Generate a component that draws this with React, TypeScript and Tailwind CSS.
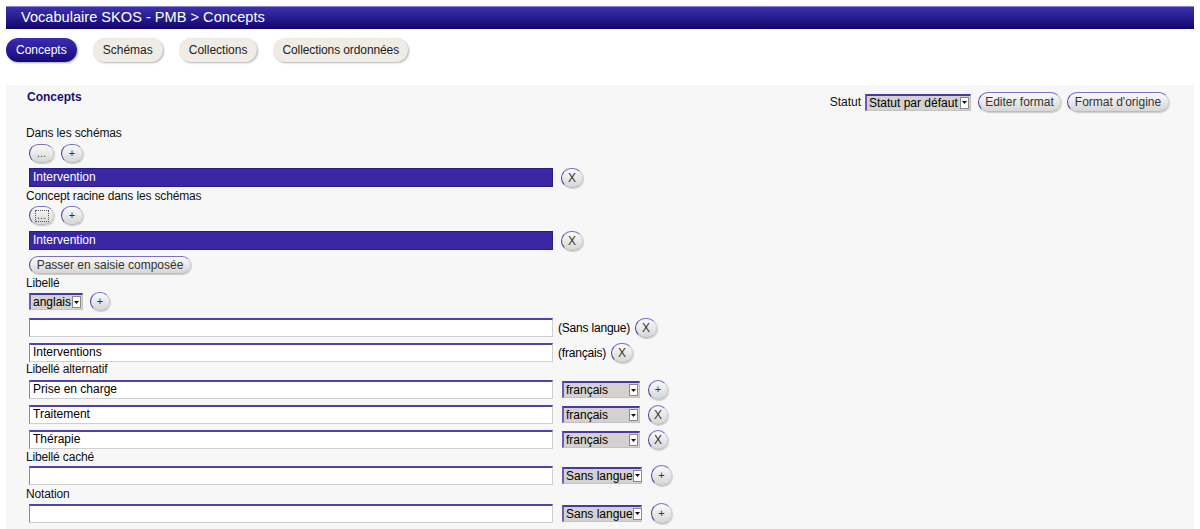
import React from "react";

const F = "font-['Liberation_Sans',Arial,sans-serif]";

function RB({ className = "", children }: { className?: string; children: React.ReactNode }) {
  return (
    <span
      className={`inline-flex shrink-0 items-center justify-center rounded-full bg-gradient-to-b from-[#fbfbfb] to-[#d6d6d6] border-[1.5px] border-t-[#7b6ec4] border-l-[#4b3ba3] border-r-[#cfcfcf] border-b-[#bcbcbc] shadow-[1px_1px_1px_rgba(0,0,0,0.18)] text-[#333] ${className}`}
    >
      {children}
    </span>
  );
}

function Arrow() {
  return (
    <span className="flex h-[12px] w-[9px] shrink-0 items-center justify-center bg-white border border-[#8a8a8a]">
      <svg width="5" height="3" viewBox="0 0 5 3">
        <path d="M0 0 L5 0 L2.5 3 Z" fill="#111" />
      </svg>
    </span>
  );
}

function Sel({ className = "", label }: { className?: string; label: string }) {
  return (
    <div
      className={`flex shrink-0 items-center justify-between h-[17px] bg-[#d5d1ce] border border-[#c2c2c2] border-t-2 border-t-[#4a3aa0] border-l-2 border-l-[#6b5db9] pr-[1px] ${className}`}
    >
      <span className="pl-[2px] text-[12px] leading-[14px] text-black whitespace-nowrap">{label}</span>
      <Arrow />
    </div>
  );
}

function Inp({ value = "" }: { value?: string }) {
  return (
    <div className="w-[524px] h-[19px] shrink-0 bg-white border border-[#cfcfcf] border-t-2 border-t-[#5042a8] border-l-[#8a80c8] pl-[3px] text-[12px] leading-[15px] text-black">
      {value}
    </div>
  );
}

function Bar({ text }: { text: string }) {
  return (
    <div className="w-[524px] h-[19px] shrink-0 bg-[#3a27a3] border border-[#2a1a86] pl-[3px] text-[12px] leading-[17px] text-white">
      {text}
    </div>
  );
}

function Label({ className = "", children }: { className?: string; children: React.ReactNode }) {
  return <div className={`h-[14px] text-[12px] tracking-[-0.15px] leading-[14px] text-[#111] ${className}`}>{children}</div>;
}

export default function App() {
  return (
    <div className={`${F} w-[1200px] h-[529px] bg-white overflow-hidden`}>
      <div className="mx-[6px] mt-[6px] h-[23px] bg-gradient-to-b from-[#3e30b0] to-[#12046c] border-t border-t-[#8c82d2] pl-[15px] text-[14.6px] leading-[21px] text-white">
        Vocabulaire SKOS - PMB &gt; Concepts
      </div>

      <div className="ml-[6px] mt-[9px] flex gap-[16px] text-[12px]">
        <span className="h-[24px] px-[10px] leading-[24px] rounded-full bg-gradient-to-b from-[#3e2cb2] to-[#16087a] text-white shadow-[1px_1px_2px_rgba(0,0,0,0.35)]">
          Concepts
        </span>
        <span className="h-[24px] px-[10px] leading-[24px] rounded-full bg-[#efebe5] text-[#222] shadow-[1px_1px_2px_rgba(0,0,0,0.3)]">
          Schémas
        </span>
        <span className="h-[24px] px-[10px] leading-[24px] rounded-full bg-[#efebe5] text-[#222] shadow-[1px_1px_2px_rgba(0,0,0,0.3)]">
          Collections
        </span>
        <span className="h-[24px] px-[9px] leading-[24px] tracking-[-0.1px] rounded-full bg-[#efebe5] text-[#222] shadow-[1px_1px_2px_rgba(0,0,0,0.3)]">
          Collections ordonnées
        </span>
      </div>

      <div className="mx-[6px] mt-[23px] h-[460px] bg-[#f7f7f7] pl-[20px] pr-[25px] pt-[7px]">
        <div className="flex h-[20px] items-start justify-between">
          <div className="pl-[1px] text-[12px] font-bold leading-[11px] text-[#1c0d6e]">Concepts</div>
          <div className="flex items-center gap-[6px] text-[12px] text-[#111]">
            <span className="mr-[-2px]">Statut</span>
            <Sel className="w-[106px]" label="Statut par défaut" />
            <RB className="h-[20px] w-[83px] ml-[1px] text-[12px]">Editer format</RB>
            <RB className="h-[20px] w-[102px] text-[12px]">Format d'origine</RB>
          </div>
        </div>

        <Label className="mt-[14px]">Dans les schémas</Label>
        <div className="mt-[4px] ml-[3px] flex h-[19px] gap-[7px]">
          <RB className="h-[19px] w-[25px] text-[10px]">…</RB>
          <RB className="h-[19px] w-[22px] text-[11px]">+</RB>
        </div>
        <div className="mt-[5px] ml-[3px] flex h-[19px] items-center gap-[8px]">
          <Bar text="Intervention" />
          <RB className="h-[20px] w-[22px] text-[12px]">X</RB>
        </div>

        <Label className="mt-[2px]">Concept racine dans les schémas</Label>
        <div className="mt-[3px] ml-[3px] flex h-[19px] gap-[7px]">
          <RB className="h-[19px] w-[25px] text-[10px]">
            <span className="border border-dotted border-[#555] px-[1px] leading-[10px]">…</span>
          </RB>
          <RB className="h-[19px] w-[22px] text-[11px]">+</RB>
        </div>
        <div className="mt-[6px] ml-[3px] flex h-[19px] items-center gap-[8px]">
          <Bar text="Intervention" />
          <RB className="h-[20px] w-[22px] text-[12px]">X</RB>
        </div>

        <div className="mt-[6px] ml-[3px] flex">
          <RB className="h-[18px] w-[162px] text-[12px]">Passer en saisie composée</RB>
        </div>

        <Label className="mt-[2px]">Libellé</Label>
        <div className="mt-[2px] ml-[3px] flex h-[19px] items-center gap-[7px]">
          <Sel className="w-[54px]" label="anglais" />
          <RB className="h-[19px] w-[20px] text-[11px]">+</RB>
        </div>
        <div className="mt-[7px] ml-[3px] flex h-[19px] items-center">
          <Inp />
          <span className="ml-[5px] text-[12px] tracking-[-0.2px]">(Sans langue)</span>
          <RB className="ml-[5px] h-[20px] w-[22px] text-[12px]">X</RB>
        </div>
        <div className="mt-[6px] ml-[3px] flex h-[19px] items-center">
          <Inp value="Interventions" />
          <span className="ml-[5px] text-[12px] tracking-[-0.2px]">(français)</span>
          <RB className="ml-[5px] h-[20px] w-[22px] text-[12px]">X</RB>
        </div>

        <Label className="mt-[0px]">Libellé alternatif</Label>
        <div className="mt-[4px] ml-[3px] flex h-[19px] items-center">
          <Inp value="Prise en charge" />
          <Sel className="ml-[9px] w-[78px]" label="français" />
          <RB className="ml-[8px] h-[20px] w-[20px] text-[11px]">+</RB>
        </div>
        <div className="mt-[6px] ml-[3px] flex h-[19px] items-center">
          <Inp value="Traitement" />
          <Sel className="ml-[9px] w-[78px]" label="français" />
          <RB className="ml-[8px] h-[20px] w-[20px] text-[12px]">X</RB>
        </div>
        <div className="mt-[6px] ml-[3px] flex h-[19px] items-center">
          <Inp value="Thérapie" />
          <Sel className="ml-[9px] w-[78px]" label="français" />
          <RB className="ml-[8px] h-[20px] w-[20px] text-[12px]">X</RB>
        </div>

        <Label className="mt-[1px]">Libellé caché</Label>
        <div className="mt-[0px] ml-[3px] flex h-[22px] items-center">
          <Inp />
          <Sel className="ml-[9px] w-[80px]" label="Sans langue" />
          <RB className="ml-[9px] h-[21px] w-[21px] text-[11px]">+</RB>
        </div>

        <Label className="mt-[1px]">Notation</Label>
        <div className="mt-[1px] ml-[3px] flex h-[22px] items-center">
          <Inp />
          <Sel className="ml-[9px] w-[80px]" label="Sans langue" />
          <RB className="ml-[9px] h-[21px] w-[21px] text-[11px]">+</RB>
        </div>
      </div>
    </div>
  );
}
